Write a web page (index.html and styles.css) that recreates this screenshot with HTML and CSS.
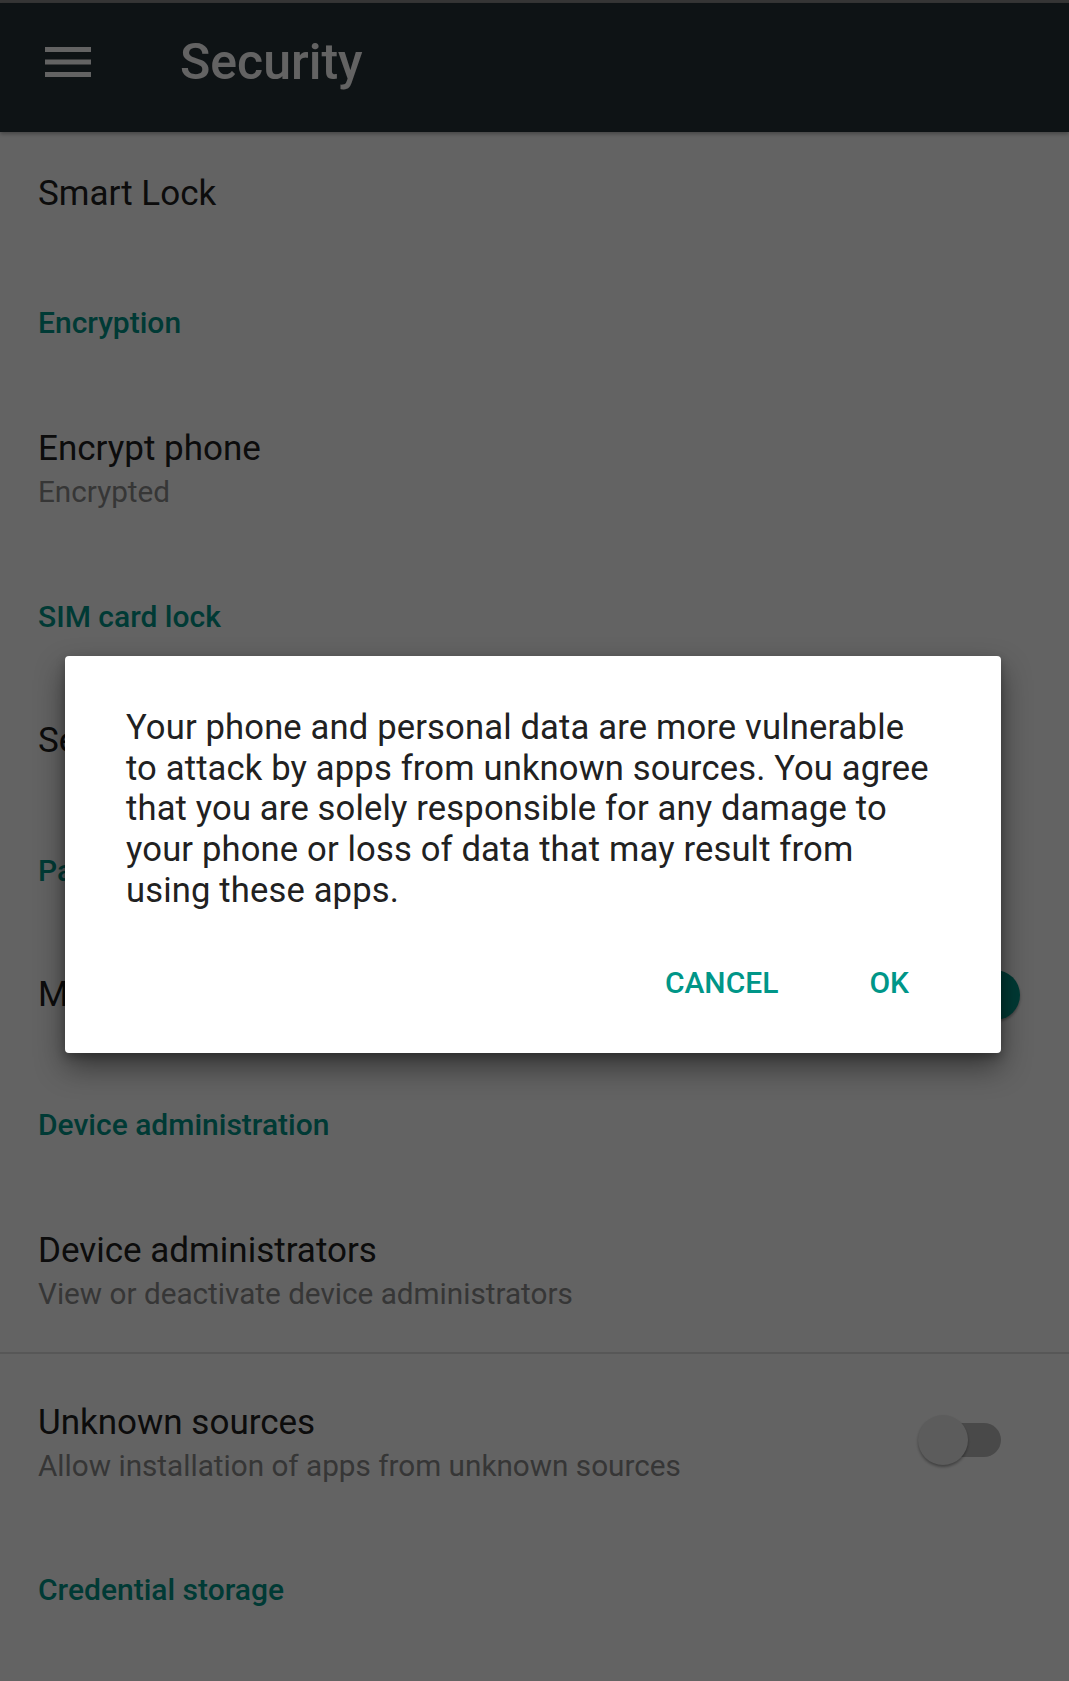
FILE: index.html
```html
<!DOCTYPE html>
<html lang="en">
<head>
<meta charset="utf-8">
<title>Security</title>
<link rel="stylesheet" href="styles.css">
</head>
<body>
<div class="screen">
  <div class="status-edge"></div>
  <header class="appbar">
    <svg class="menu-icon" width="46" height="30" viewBox="0 0 46 30" aria-hidden="true">
      <rect x="0" y="0" width="46" height="5" fill="#ffffff"/>
      <rect x="0" y="12.5" width="46" height="5" fill="#ffffff"/>
      <rect x="0" y="25" width="46" height="5" fill="#ffffff"/>
    </svg>
    <h1 class="appbar-title">Security</h1>
  </header>

  <main class="list">
    <div class="item item-first"><span class="item-title">Smart Lock</span></div>

    <div class="category">Encryption</div>
    <div class="item item-double">
      <div class="item-text">
        <div class="item-title">Encrypt phone</div>
        <div class="item-sub">Encrypted</div>
      </div>
    </div>

    <div class="category">SIM card lock</div>
    <div class="item"><span class="item-title">Set up SIM card lock</span></div>

    <div class="category">Passwords</div>
    <div class="item item-switch">
      <span class="item-title">Make passwords visible</span>
      <span class="switch switch-on"><span class="track"></span><span class="thumb"></span></span>
    </div>

    <div class="category">Device administration</div>
    <div class="item item-double">
      <div class="item-text">
        <div class="item-title">Device administrators</div>
        <div class="item-sub">View or deactivate device administrators</div>
      </div>
    </div>
    <div class="item item-double item-divided item-switch">
      <div class="item-text">
        <div class="item-title">Unknown sources</div>
        <div class="item-sub">Allow installation of apps from unknown sources</div>
      </div>
      <span class="switch"><span class="track"></span><span class="thumb"></span></span>
    </div>

    <div class="category">Credential storage</div>
  </main>

  <div class="scrim"></div>

  <div class="dialog" role="dialog">
    <p class="dialog-message">Your phone and personal data are more vulnerable to attack by apps from unknown sources. You agree that you are solely responsible for any damage to your phone or loss of data that may result from using these apps.</p>
    <div class="dialog-actions">
      <button class="dialog-btn">CANCEL</button>
      <button class="dialog-btn">OK</button>
    </div>
  </div>
</div>
</body>
</html>
```

FILE: styles.css
```css
* {
  box-sizing: border-box;
}

html, body {
  margin: 0;
  padding: 0;
}

body {
  font-family: Roboto, "Liberation Sans", Arial, sans-serif;
  background: #ffffff;
  width: 1069px;
  height: 1681px;
  overflow: hidden;
}

.screen {
  position: relative;
  width: 1069px;
  height: 1681px;
  background: #ffffff;
  overflow: hidden;
}

.status-edge {
  height: 3px;
  background: #8a8a8a;
}

.appbar {
  height: 129px;
  background: #263238;
  display: flex;
  align-items: center;
  padding: 0 0 12px 45px;
  box-shadow: 0 2px 4px rgba(0, 0, 0, 0.3);
  position: relative;
  z-index: 1;
}

.menu-icon {
  display: block;
  flex: none;
}

.appbar-title {
  margin: 0 0 0 89px;
  font-size: 50px;
  font-weight: 500;
  color: #ffffff;
  line-height: 1;
}

.list {
  display: flex;
  flex-direction: column;
}

.item {
  height: 126px;
  display: flex;
  align-items: center;
  padding: 0 49px 0 38px;
}

.item-first {
  height: 124px;
}

.item-title {
  font-size: 35px;
  line-height: 44px;
  color: #212121;
}

.item-sub {
  font-size: 29.7px;
  line-height: 42px;
  color: #8c8c8c;
}

.item-double {
  height: 166px;
  align-items: flex-start;
  padding-top: 43px;
}

.item-divided {
  height: 171px;
  border-top: 2px solid #e0e0e0;
  padding-top: 47px;
}

.item-switch {
  justify-content: space-between;
}

.item-text {
  display: flex;
  flex-direction: column;
}

.item-divided .switch {
  margin-top: 14px;
}

.category {
  height: 128px;
  display: flex;
  align-items: center;
  padding: 4px 38px 0 38px;
  font-size: 30px;
  font-weight: 500;
  color: #009688;
}

.switch {
  position: relative;
  width: 102px;
  height: 50px;
  flex: none;
}

.switch .track {
  position: absolute;
  left: 19px;
  right: 19px;
  top: 8px;
  height: 34px;
  border-radius: 17px;
  background: #bdbdbd;
}

.switch .thumb {
  position: absolute;
  left: 0;
  top: 0;
  width: 50px;
  height: 50px;
  border-radius: 50%;
  background: #ececec;
  box-shadow: 0 2px 3px rgba(0, 0, 0, 0.35);
}

.switch-on .track {
  background: #80cbc4;
}

.switch-on .thumb {
  left: auto;
  right: 0;
  background: #009688;
}

.scrim {
  position: absolute;
  inset: 0;
  background: rgba(0, 0, 0, 0.61);
  z-index: 2;
}

.dialog {
  position: absolute;
  left: 65px;
  top: 656px;
  width: 936px;
  height: 397px;
  background: #ffffff;
  border-radius: 4px;
  box-shadow: 0 14px 30px rgba(0, 0, 0, 0.45), 0 4px 10px rgba(0, 0, 0, 0.25);
  z-index: 3;
  display: flex;
  flex-direction: column;
}

.dialog-message {
  margin: 0;
  padding: 51px 0 0 61px;
  width: 869px;
  font-size: 34.6px;
  line-height: 40.7px;
  letter-spacing: 0.15px;
  color: #212121;
}

.dialog-actions {
  margin-top: auto;
  height: 140px;
  display: flex;
  align-items: center;
  justify-content: flex-end;
  gap: 49px;
  padding-right: 71px;
}

.dialog-btn {
  border: 0;
  background: transparent;
  padding: 0 21px;
  font-family: Roboto, "Liberation Sans", Arial, sans-serif;
  font-size: 30px;
  font-weight: 500;
  color: #009688;
  line-height: 40px;
}
```
